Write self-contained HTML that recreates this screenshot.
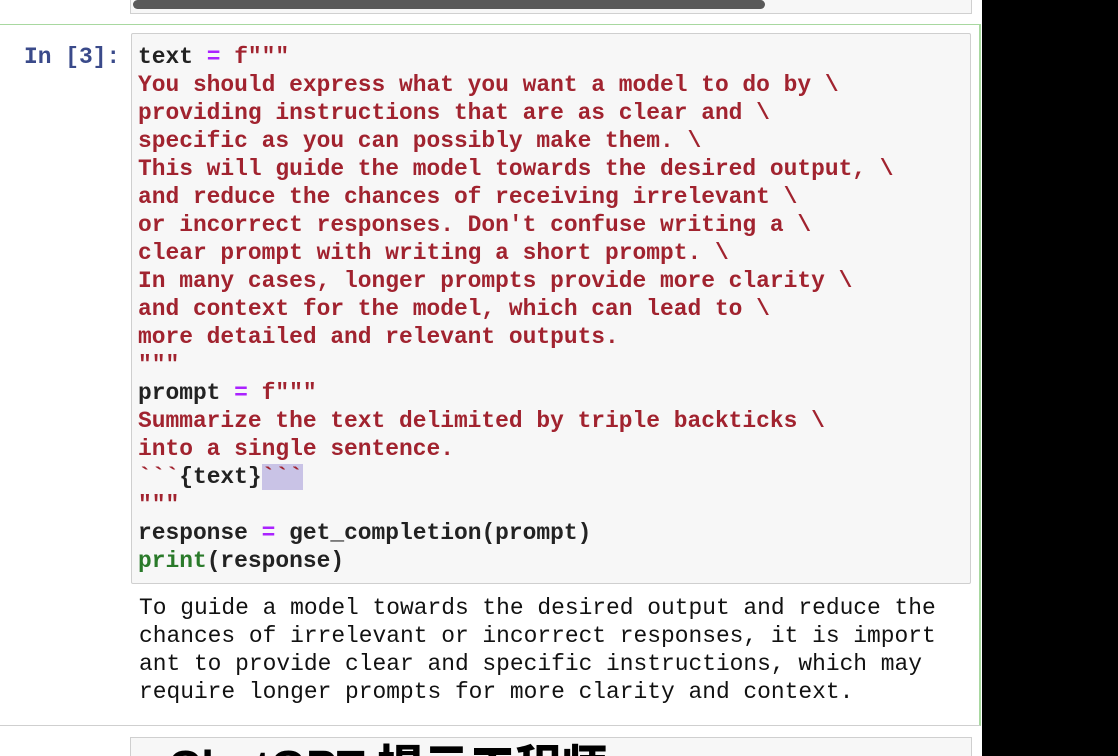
<!DOCTYPE html>
<html style="overflow:hidden;height:756px"><head><style>
body{margin:0;width:1118px;height:756px;background:#fff;position:relative;overflow:hidden;font-family:"Liberation Mono","DejaVu Sans Mono",monospace;}
.black{position:absolute;left:982px;top:0;width:136px;height:756px;background:#000;}
.prev{position:absolute;left:130px;top:-10px;width:840px;height:22px;border:1px solid #d0d0d0;background:#f7f7f7;}
.sb{position:absolute;left:133px;top:0;width:632px;height:9px;background:#5a5a5a;border-radius:5px;}
.cell{position:absolute;left:-2px;top:24px;width:980px;height:700px;border:1px solid #a8d8a0;border-right:2px solid #a8d8a0;border-bottom:1px solid #cfcfcf;}
.inp{position:absolute;left:131px;top:33px;width:838px;height:549px;background:#f7f7f7;border:1px solid #cfcfcf;border-radius:2px;}
pre{margin:0;font-family:inherit;font-size:22.9px;line-height:28px;font-weight:bold;}
.code{position:absolute;left:138px;top:43px;color:#222;}
.s{color:#a1232f;} .o{color:#aa22ff;} .g{color:#2a7a2a;}
.prompt{position:absolute;left:24px;top:43px;color:#3a4a8a;font-size:22.9px;line-height:28px;font-weight:bold;}
.out{position:absolute;left:139px;top:594px;color:#111;font-weight:normal;}
.sel{background:#c9c3e6;}
.clip{position:absolute;left:0;top:730px;width:982px;height:26px;overflow:hidden;}
.next{position:absolute;left:130px;top:7px;width:840px;height:40px;background:#f7f7f7;border:1px solid #cfcfcf;}
.sub{position:absolute;left:168px;top:14px;font-family:"Liberation Sans","Noto Sans CJK SC",sans-serif;font-weight:900;font-size:46px;color:#000;line-height:46px;white-space:nowrap;}
</style></head><body>
<div class="prev"></div><div class="sb"></div>
<div class="cell"></div>
<div class="inp"></div>
<div class="prompt">In [3]:</div>
<pre class="code">text <span class="o">=</span> <span class="s">f"""
You should express what you want a model to do by \
providing instructions that are as clear and \
specific as you can possibly make them. \
This will guide the model towards the desired output, \
and reduce the chances of receiving irrelevant \
or incorrect responses. Don't confuse writing a \
clear prompt with writing a short prompt. \
In many cases, longer prompts provide more clarity \
and context for the model, which can lead to \
more detailed and relevant outputs.
"""</span>
prompt <span class="o">=</span> <span class="s">f"""
Summarize the text delimited by triple backticks \
into a single sentence.
&#96;&#96;&#96;</span>{text}<span class="s sel">&#96;&#96;&#96;</span><span class="s">
"""</span>
response <span class="o">=</span> get_completion(prompt)
<span class="g">print</span>(response)</pre>
<pre class="out">To guide a model towards the desired output and reduce the
chances of irrelevant or incorrect responses, it is import
ant to provide clear and specific instructions, which may
require longer prompts for more clarity and context.</pre>
<div class="clip"><div class="next"></div><div class="sub">ChatGPT 提示工程师</div></div>
<div class="black"></div>
</body></html>
